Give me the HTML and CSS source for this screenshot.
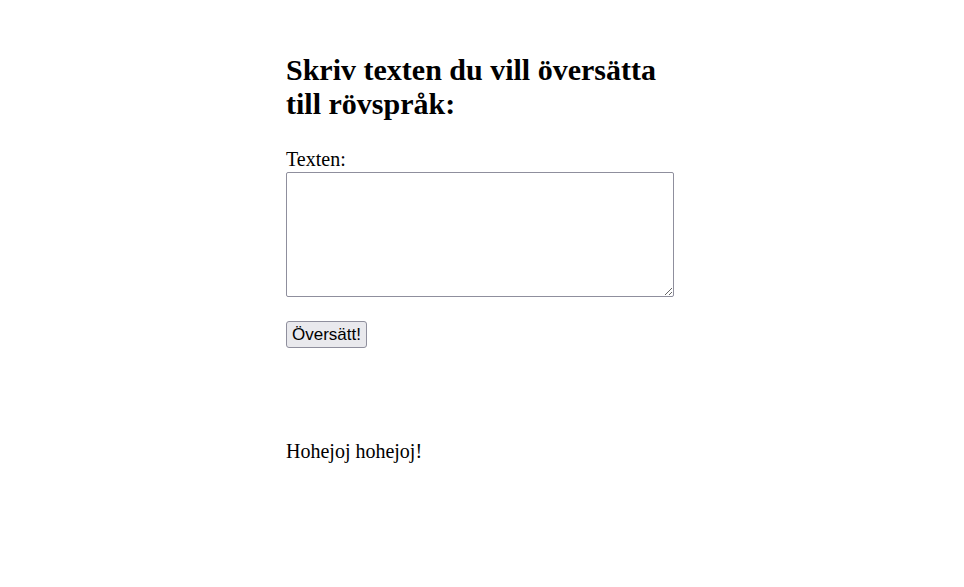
FILE: index.html
```html
<!DOCTYPE html>
<html lang="sv">
<head>
<meta charset="utf-8">
<title>Rövspråk</title>
<link rel="stylesheet" href="styles.css">
</head>
<body>
<main class="page">
  <h1 class="title">Skriv texten du vill översätta till rövspråk:</h1>
  <form class="form">
    <label class="label" for="txt">Texten:</label>
    <textarea id="txt" class="input"></textarea>
    <button type="button" class="btn">Översätt!</button>
  </form>
  <p class="result">Hohejoj hohejoj!</p>
</main>
</body>
</html>
```

FILE: styles.css
```css
html, body {
  margin: 0;
  padding: 0;
  background: #fff;
}
body {
  font-family: "Liberation Serif", "Times New Roman", serif;
  font-size: 20px;
  color: #000;
}
.page {
  width: 392px;
  margin: 0 auto;
  padding-top: 53px;
}
.title {
  font-size: 30px;
  font-weight: bold;
  line-height: 33.5px;
  margin: 0 0 28px 0;
}
.form {
  display: flex;
  flex-direction: column;
  align-items: flex-start;
}
.label {
  line-height: 23px;
}
.input {
  box-sizing: border-box;
  width: 388px;
  height: 125px;
  margin: 1px 0 0 0;
  border: 1px solid #8f8f9d;
  border-radius: 2px;
  resize: both;
}
.btn {
  box-sizing: border-box;
  width: 81px;
  margin-top: 24px;
  font-family: "Liberation Sans", Arial, sans-serif;
  font-size: 17px;
  padding: 0 4px;
  height: 27px;
  border: 1px solid #8f8f9d;
  border-radius: 3px;
  background: #e9e9ed;
  color: #000;
}
.result {
  margin: 92px 0 0 0;
  line-height: 23px;
}
```
